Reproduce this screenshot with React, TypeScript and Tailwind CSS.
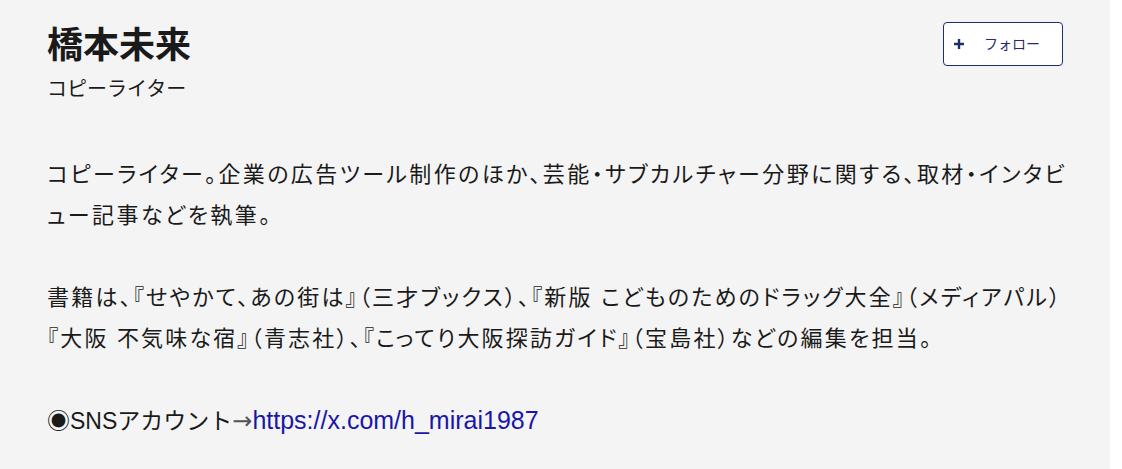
export default function App() {
  return (
    <div className="min-h-[469px] w-full bg-white">
      <div
        className="min-h-[469px] w-[1110px] bg-[#f4f4f4] px-[47px] pt-[22px] text-[#1a1a1a]"
        style={{ fontFamily: '"Liberation Sans", "Noto Sans CJK JP", sans-serif' }}
      >
        <header className="flex items-start justify-between">
          <div>
            <h1 className="text-[36px] font-bold leading-[48px]">橋本未来</h1>
            <p className="mt-[5px] text-[20px] leading-[28px]">コピーライター</p>
          </div>
          <button className="flex h-[44px] w-[120px] items-center rounded-[4px] border border-[#1f2d6b] bg-white pl-[9px] text-[14px] text-[#1f2d6b]">
            <svg width="12" height="12" viewBox="0 0 12 12" className="mr-[19px]">
              <path d="M6 1v10M1 6h10" stroke="#1f2d6b" strokeWidth="2.4" />
            </svg>
            フォロー
          </button>
        </header>

        <div className="mt-[51px] whitespace-nowrap text-[22px] leading-[41px] [font-feature-settings:'palt']">
          <p className="tracking-[2.4px]">
            コピーライター。企業の広告ツール制作のほか、芸能・サブカルチャー分野に関する、取材・インタビ
            <br />
            ュー記事などを執筆。
          </p>
          <p className="mt-[41px] tracking-[2.2px]">
            書籍は、『せやかて、あの街は』（三才ブックス）、『新版 こどものためのドラッグ大全』（メディアパル）
            <br />
            『大阪 不気味な宿』（青志社）、『こってり大阪探訪ガイド』（宝島社）などの編集を担当。
          </p>
          <p className="mt-[41px] text-[23px] [font-feature-settings:normal]">
            ◉SNSアカウント<span className="font-['DejaVu_Sans'] text-[24px] text-[#555]">→</span>
            <a href="#" className="text-[25px] text-[#1a16a8]">
              https://x.com/h_mirai1987
            </a>
          </p>
        </div>
      </div>
    </div>
  )
}
